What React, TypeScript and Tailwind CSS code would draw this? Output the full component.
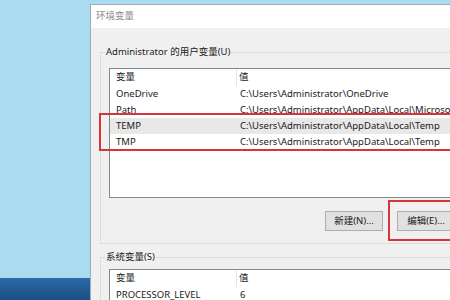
const font = { fontFamily: '"Noto Sans", "Noto Sans CJK SC", sans-serif' }

interface EnvRow {
	name: string
	value: string
	selected?: boolean
}

const userVars: EnvRow[] = [
	{ name: "OneDrive", value: "C:\\Users\\Administrator\\OneDrive" },
	{ name: "Path", value: "C:\\Users\\Administrator\\AppData\\Local\\Microsoft\\WindowsApps;" },
	{ name: "TEMP", value: "C:\\Users\\Administrator\\AppData\\Local\\Temp", selected: true },
	{ name: "TMP", value: "C:\\Users\\Administrator\\AppData\\Local\\Temp" },
]

const systemVars: EnvRow[] = [{ name: "PROCESSOR_LEVEL", value: "6" }]

const VarList = ({ rows, height }: { rows: EnvRow[]; height: string }) => {
	return (
		<div className={`${height} w-[400px] border border-[#828790] bg-white overflow-hidden`}>
			<div className="flex h-[17px] items-center">
				<div className="w-[127px] shrink-0 h-full flex items-center pl-[6px] border-r border-[#e5e5e5]">变量</div>
				<div className="pl-[2px]">值</div>
			</div>
			{rows.map((r) => (
				<div key={r.name} className={`flex h-[16px] items-center ${r.selected ? "bg-[#e8e8e8]" : ""}`}>
					<div className="w-[128px] shrink-0 pl-[6px] whitespace-nowrap">{r.name}</div>
					<div className="pl-[2px] whitespace-nowrap">{r.value}</div>
				</div>
			))}
		</div>
	)
}

const WinButton = ({ label }: { label: string }) => (
	<div className="w-[58px] h-[20px] shrink-0 flex items-center justify-center bg-[#e1e1e1] border border-[#adadad] text-[#1a1a1a]">
		{label}
	</div>
)

export default function App() {
	return (
		<div className="relative w-[450px] h-[300px] overflow-hidden flex bg-[#a9dcf1] text-[9.5px] text-[#1a1a1a]" style={font}>
			{/* desktop */}
			<div className="w-[90px] shrink-0 flex flex-col">
				<div className="flex-1" />
				<div className="h-[22px] bg-gradient-to-b from-[#2a6aa6] to-[#1b4f86]" />
			</div>

			{/* dialog */}
			<div className="w-[380px] shrink-0 mt-[4px] flex flex-col border-l border-t border-[#a3acb5] bg-[#f0f0f0]">
				<div className="h-[23px] shrink-0 bg-white flex items-center pl-[5px] text-[#8a8a8a]">环境变量</div>

				<div className="pl-[9px] pt-[16px]">
					<fieldset className="border border-[#dcdcdc]">
						<legend className="ml-[4px] px-[1px] leading-[16px]">Administrator 的用户变量(U)</legend>
						<div className="pl-[8px] pt-[8px] pb-[12px]">
							<VarList rows={userVars} height="h-[130px]" />
							<div className="flex gap-[14px] mt-[13px] ml-[216px]">
								<WinButton label="新建(N)..." />
								<WinButton label="编辑(E)..." />
							</div>
						</div>
					</fieldset>

					<fieldset className="border border-[#dcdcdc] mt-[5px]">
						<legend className="ml-[4px] px-[1px] leading-[16px]">系统变量(S)</legend>
						<div className="pl-[8px] pt-[4px]">
							<VarList rows={systemVars} height="h-[60px]" />
						</div>
					</fieldset>
				</div>
			</div>

			{/* red annotation boxes */}
			<div className="absolute left-[99px] top-[113px] w-[360px] h-[38px] border-2 border-[#d8333b]" />
			<div className="absolute left-[388px] top-[200px] w-[70px] h-[41px] border-2 border-[#d8333b]" />
		</div>
	)
}
